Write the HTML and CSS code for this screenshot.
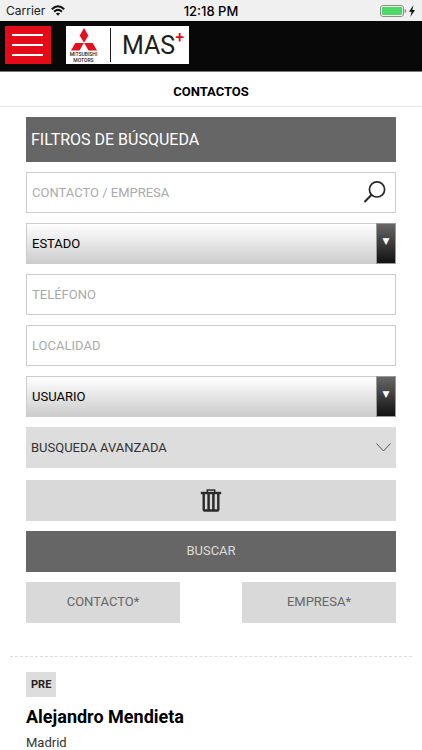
FILE: index.html
```html
<!DOCTYPE html>
<html lang="es">
<head>
<meta charset="utf-8">
<meta name="viewport" content="width=device-width, initial-scale=1">
<title>Contactos</title>
<link rel="stylesheet" href="styles.css">
</head>
<body>
<div class="status">
  <div class="status-side">
    <span>Carrier</span>
    <svg width="14" height="11" viewBox="0 0 14 11" fill="none" stroke="#111" stroke-width="2"><path d="M.8 4.2Q7-1.8 13.2 4.2M3.1 6.7Q7 3.1 10.9 6.7"/><path d="M7 10.8 4.9 8.5Q7 6.8 9.1 8.5Z" fill="#111" stroke="none"/></svg>
  </div>
  <span class="clock">12:18 PM</span>
  <div class="status-side status-right">
    <svg width="36" height="12" viewBox="0 0 36 12"><rect x=".5" y=".5" width="23" height="11" rx="2.5" fill="#f4f4f4" stroke="#8d8d8d"/><rect x="2" y="2" width="20" height="8" rx="1" fill="#4cd964"/><path d="M24.7 4q1.5 0 1.5 2t-1.5 2z" fill="#8d8d8d"/><path d="M33.5 0 29 6.7h2.6L30.3 12 35 5.1h-2.7z" fill="#111"/></svg>
  </div>
</div>
<header class="topbar">
  <button class="menu" type="button" aria-label="Menú">
    <svg width="32" height="24" viewBox="0 0 32 24" stroke="#fff" stroke-width="2"><path d="M0 2h31M0 12h31M0 22h31"/></svg>
  </button>
  <a class="logo" href="#">
    <span class="brand">
      <svg width="26" height="23" viewBox="0 0 26 23" fill="#e60f1e"><path d="M13 0l4.3 7.4L13 14.8 8.7 7.4zM12.8 15 8.5 22.5H0l4.3-7.5zM13.2 15h8.5l4.3 7.5h-8.5z"/></svg>
      <span>MITSUBISHI<br>MOTORS</span>
    </span>
    <span class="mas">MAS</span>
    <sup class="plus">+</sup>
  </a>
</header>
<h1 class="title">CONTACTOS</h1>
<main>
  <form class="search">
    <h2 class="heading">FILTROS DE BÚSQUEDA</h2>
    <div class="control">
      <input class="field" type="text" placeholder="CONTACTO / EMPRESA" aria-label="Contacto / Empresa">
      <button class="lens" type="button" aria-label="Buscar contacto">
        <svg width="24" height="24" viewBox="0 0 24 24" fill="none" stroke="#262626" stroke-width="1.7"><circle cx="14" cy="9.4" r="7.6"/><path d="M8.6 14.8 1.5 22" stroke-width="2"/></svg>
      </button>
    </div>
    <div class="control picker"><select class="field" aria-label="Estado"><option>ESTADO</option></select></div>
    <input class="field" type="tel" placeholder="TELÉFONO" aria-label="Teléfono">
    <input class="field" type="text" placeholder="LOCALIDAD" aria-label="Localidad">
    <div class="control picker"><select class="field" aria-label="Usuario"><option>USUARIO</option></select></div>
    <button class="advanced" type="button">BUSQUEDA AVANZADA
      <svg width="15" height="9" viewBox="0 0 15 9" fill="none" stroke="#555"><path d="M.5.5l7 7.5 7-7.5"/></svg>
    </button>
    <div class="actions">
      <button class="btn" type="reset" aria-label="Borrar filtros">
        <svg width="22" height="24" viewBox="0 0 22 24" fill="none" stroke="#2b2b2b"><path d="M.8 5h20.4" stroke-width="2.4"/><path d="M7.3 4.500V1.900h7.400v2.600" stroke-width="1.500"/><path d="M3.700 5v16.500q0 1 1 1h12.600q1 0 1-1V5" stroke-width="2.400"/><path d="M8.600 6v16M13.400 6v16" stroke-width="2.500"/></svg>
      </button>
      <button class="btn dark" type="submit">BUSCAR</button>
      <div class="pair">
        <button class="btn" type="button">CONTACTO*</button>
        <button class="btn" type="button">EMPRESA*</button>
      </div>
    </div>
  </form>
  <article class="contact">
    <span class="tag">PRE</span>
    <h3>Alejandro Mendieta</h3>
    <p>Madrid</p>
  </article>
</main>
</body>
</html>
```
FILE: styles.css
```css
*, ::after { box-sizing: border-box; }
html { overflow: hidden; }
body { margin: 0; background: #fff; color: #000; font-family: Roboto, sans-serif; font-size: 13px; }
h1, h2, h3, p { margin: 0; }
button, input, select { font: inherit; border-radius: 0; }
button { border: 0; padding: 0; cursor: pointer; }
svg { display: block; }

.status { display: flex; align-items: center; height: 21px; padding: 0 6px; background: #f0f0f0; color: #222; font-family: Inter, sans-serif; font-size: 12px; }
.status-side { display: flex; flex: 1; align-items: center; gap: 6px; }
.status-right { justify-content: flex-end; padding-right: 0; }
.clock { color: #000; font-size: 13px; font-weight: 500; }

.topbar { display: flex; gap: 15px; height: 51px; padding: 5px; background: #080808; border-bottom: 1px solid #777; }
.menu { display: flex; width: 46px; height: 38px; align-items: center; justify-content: center; background: #e40a18; }
.logo { display: flex; width: 123px; height: 38px; padding: 2px 4px 2px 5px; background: #fff; color: #1d1d1b; text-decoration: none; }
.brand { display: flex; flex-direction: column; flex: none; align-items: center; width: 40px; padding-right: 14px; border-right: 1px solid #1d1d1b; font-size: 5px; font-weight: 500; line-height: 6px; text-align: center; }
.brand svg { flex: none; }
.mas { padding-left: 11px; font-size: 25px; font-weight: 400; line-height: 36px; }
.plus { color: #e40a18; font-size: 16px; font-weight: 500; line-height: 20px; }

.title { height: 35px; border-bottom: 1px solid #e6e6e6; font-size: 13px; font-weight: 700; line-height: 39px; text-align: center; }
.search { display: flex; flex-direction: column; gap: 10px; padding: 10px 26px 33px; }
.heading { height: 45px; padding-left: 5px; background: #666; color: #fff; font-size: 16px; font-weight: 400; line-height: 45px; }
.control { position: relative; }
.field { display: block; width: 100%; height: 41px; padding: 0 5px; border: 1px solid #ccc; background: #fff; color: #000; }
.field::placeholder { color: #aaa; opacity: 1; }
.lens { position: absolute; top: 8px; right: 9px; background: none; }
select.field { appearance: none; background: linear-gradient(#fff, #ccc); }
.picker::after { content: "▼"; position: absolute; top: 0; right: 0; width: 20px; height: 41px; border: 1px solid #999; background: linear-gradient(#666, #111); color: #fff; font-family: "DejaVu Sans", sans-serif; font-size: 9px; line-height: 34px; text-align: center; pointer-events: none; }
.advanced { display: flex; height: 41px; align-items: center; justify-content: space-between; padding: 0 5px; background: #ddd; color: #333; }
.actions { display: grid; gap: 10px; padding-top: 2px; }
.btn { display: flex; height: 41px; align-items: center; justify-content: center; padding-bottom: 2px; background: #d9d9d9; color: #666; }
.dark { background: #666; color: #ddd; }
.pair { display: grid; grid-template-columns: 1fr 1fr; gap: 62px; }

.contact { margin: 0 10px; padding: 15px 16px 0; border-top: 1px dashed #ddd; }
.tag { display: inline-block; padding: 0 5px; background: #ddd; color: #222; font-size: 11px; font-weight: 700; line-height: 25px; }
.contact h3 { margin-top: 8px; font-size: 18px; line-height: 24px; }
.contact p { margin-top: 4px; color: #333; line-height: 20px; }
```
